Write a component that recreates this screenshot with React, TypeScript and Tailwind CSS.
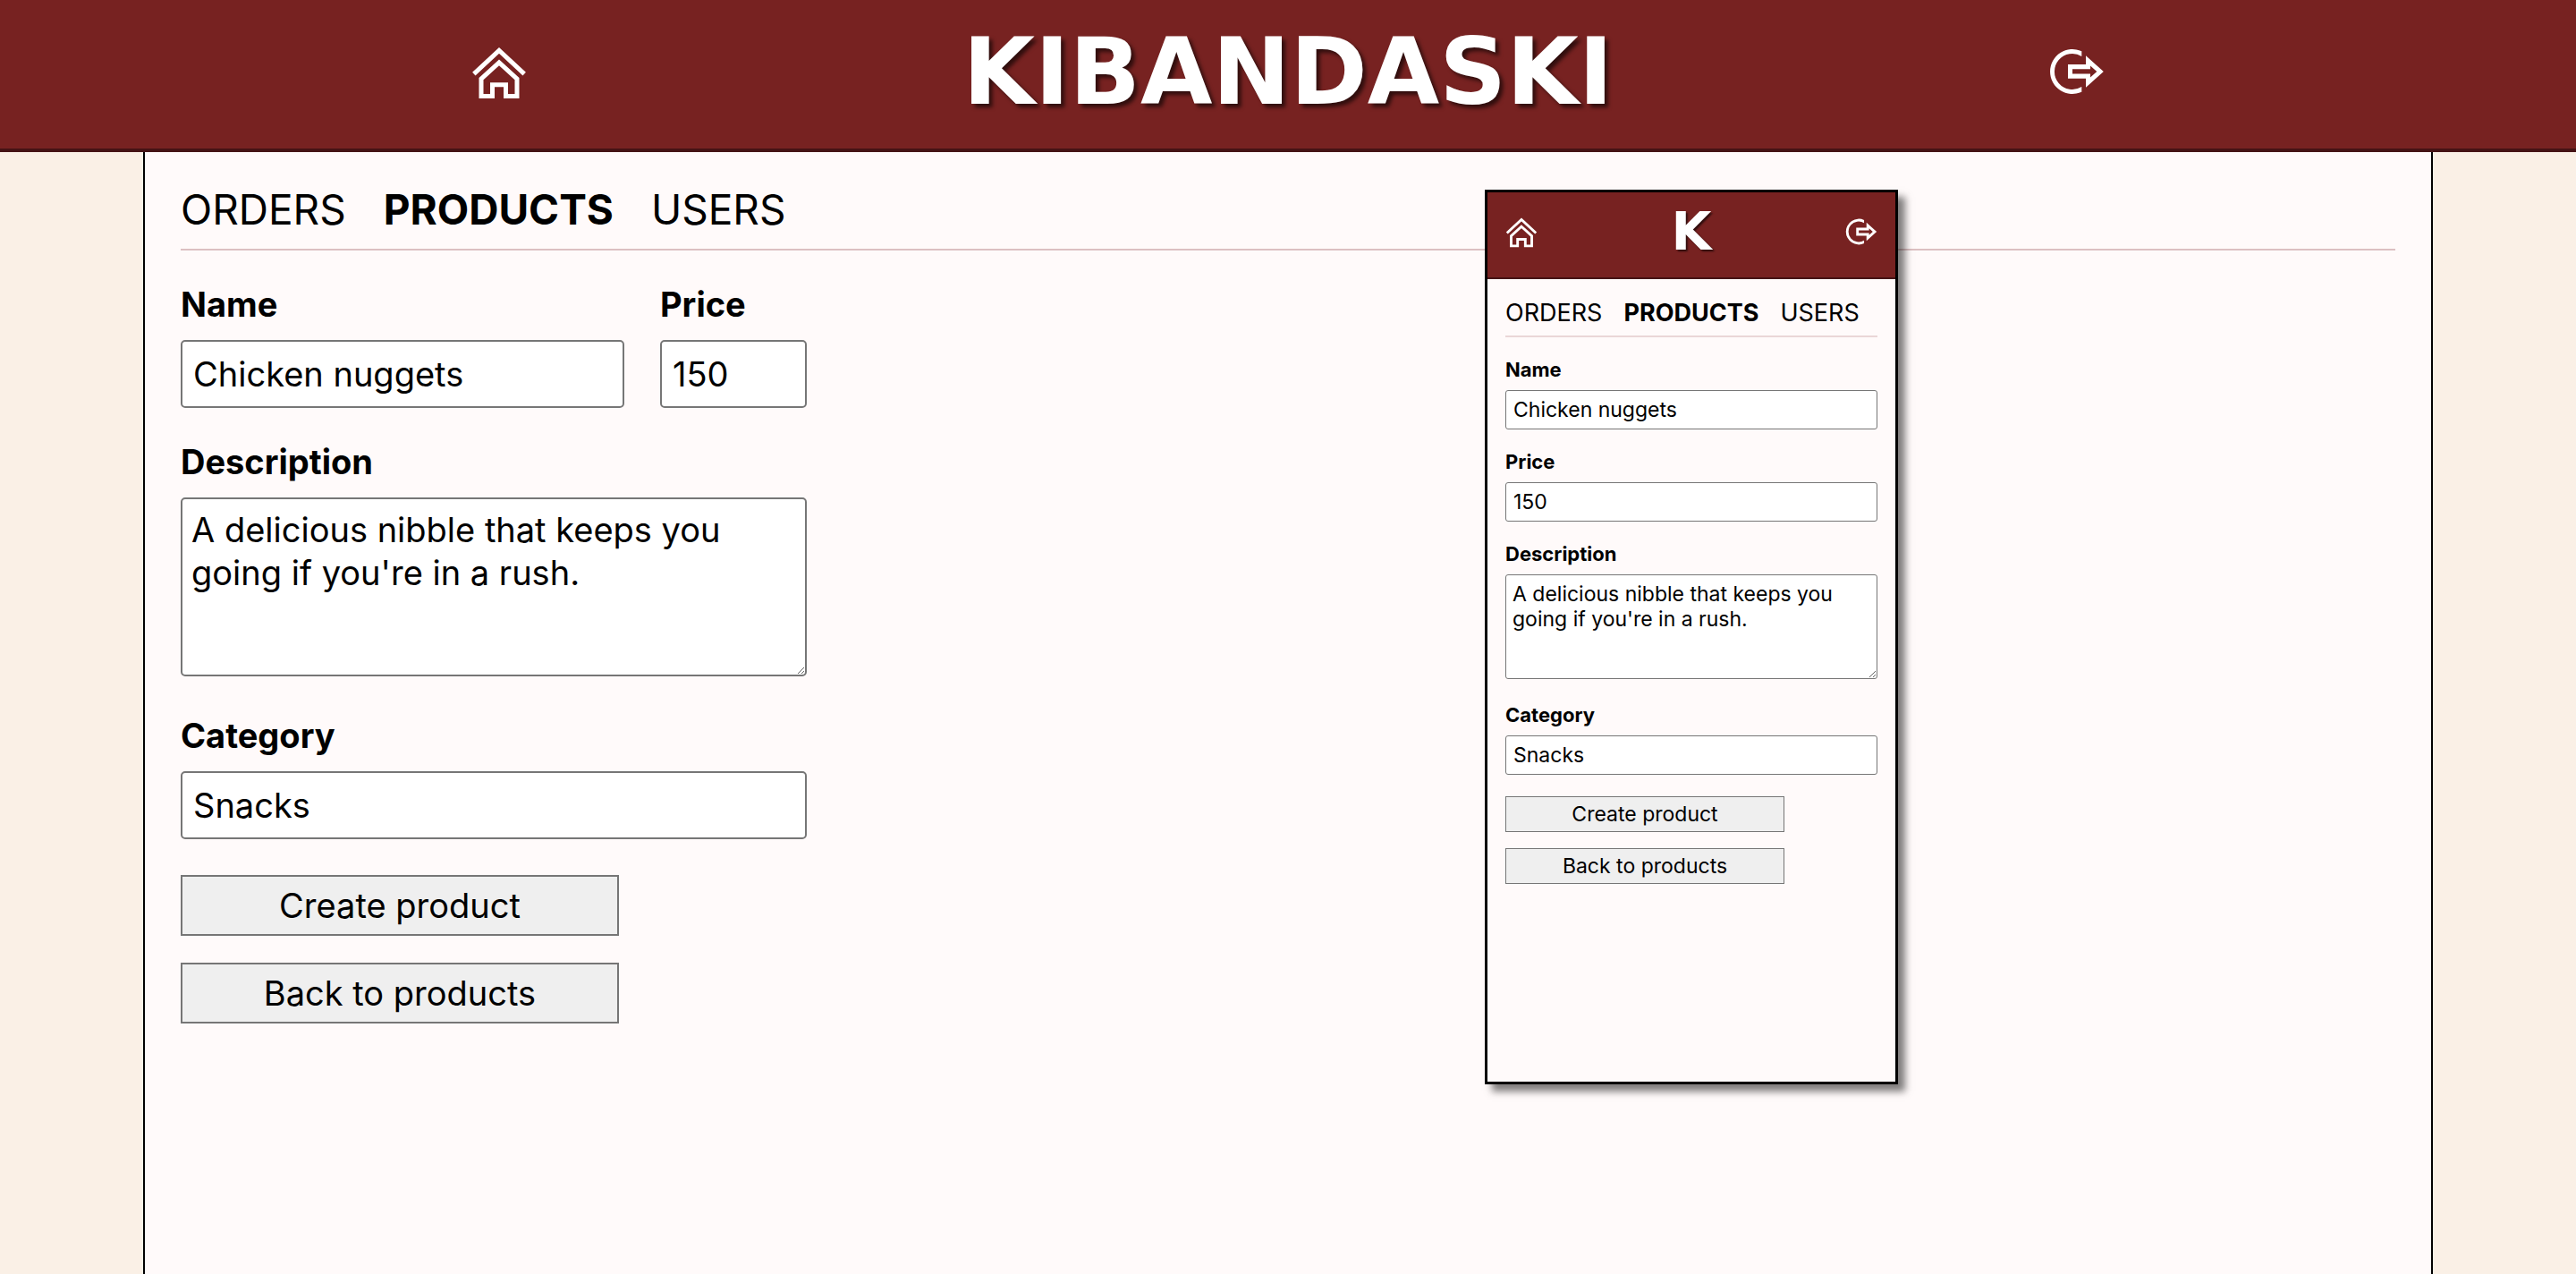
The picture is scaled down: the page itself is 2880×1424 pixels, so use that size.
import { useId } from "react";
import clsx from "clsx";

type Size = "large" | "small";

function HomeIcon({ className }: { className: string }) {
  return (
    <svg viewBox="0 0 80 80" fill="none" stroke="currentColor" strokeWidth="5" strokeMiterlimit="10" className={className} aria-hidden="true">
      <path d="M11.8 42.6 40 16.3 68.2 42.6" />
      <path d="M40 29.9 60 48.2V67.5H47.5V54.8H32.5V67.5H20V48.2Z" />
    </svg>
  );
}

function LogoutIcon({ className }: { className: string }) {
  return (
    <svg viewBox="0 0 80 80" fill="currentColor" className={className} aria-hidden="true">
      <path d="M45.3 17.2A25 25 0 1 0 45.3 62.8V57.1A20 20 0 1 1 45.3 22.9Z" />
      <path fillRule="evenodd" d="M30 32H50V22.3L69.8 40 50 57.7V47.7H30ZM35 37.2V42.5H55V46.5L62.3 40 55 33.5V37.2Z" />
    </svg>
  );
}

function Header({ size }: { size: Size }) {
  const large = size === "large";
  const icon = large ? "size-20" : "size-[46px]";
  return (
    <header
      className={clsx(
        "flex items-center justify-between border-[#451315] bg-[#772221] text-white",
        large ? "border-b-4 px-[18%] pt-6 pb-[30px]" : "border-b-2 px-[15px] pt-[21px] pb-7",
      )}
    >
      <a href="#home" aria-label="Home">
        <HomeIcon className={icon} />
      </a>
      <h1
        className={clsx(
          "font-['DejaVu_Sans',sans-serif] font-bold",
          large
            ? "text-[104px] leading-[112px] [text-shadow:4px_4px_4px_rgba(0,0,0,0.6)]"
            : "text-[58px] leading-[46px] [text-shadow:2px_2px_2px_rgba(0,0,0,0.6)]",
        )}
      >
        {large ? "KIBANDASKI" : "K"}
      </h1>
      <a href="#logout" aria-label="Log out">
        <LogoutIcon className={icon} />
      </a>
    </header>
  );
}

function Nav({ size }: { size: Size }) {
  return (
    <nav
      className={clsx(
        "flex border-b-2",
        size === "large"
          ? "gap-[42px] border-[#dcc0c2] pt-9 pb-4 text-[46px] leading-[56px]"
          : "gap-6 border-[#ead6d7] pt-[22px] pb-[9px] text-[27px] leading-8",
      )}
    >
      <a href="#orders">ORDERS</a>
      <a href="#products" aria-current="page" className="font-bold">
        PRODUCTS
      </a>
      <a href="#users">USERS</a>
    </nav>
  );
}

interface FieldProps {
  size: Size;
  label: string;
  value: string;
  multiline?: boolean;
  className?: string;
}

function Field({ size, label, value, multiline, className }: FieldProps) {
  const id = useId();
  const large = size === "large";
  const box = clsx(
    "block w-full border-[#767676] bg-white",
    large ? "rounded-[5px] border-2 text-[38px] leading-[48px]" : "rounded-[3px] border text-[23px] leading-7",
  );
  return (
    <div className={className}>
      <label
        htmlFor={id}
        className={clsx("block font-bold", large ? "mb-4 text-[38px] leading-[48px]" : "mb-[9px] text-[22px] leading-7")}
      >
        {label}
      </label>
      {multiline ? (
        <textarea
          id={id}
          defaultValue={value}
          className={clsx(box, large ? "mb-[6px] h-[200px] p-[10px]" : "mb-1 h-[117px] p-[7px]")}
        />
      ) : (
        <input id={id} type="text" defaultValue={value} className={clsx(box, large ? "p-3" : "px-2 py-[7px]")} />
      )}
    </div>
  );
}

function ProductForm({ size }: { size: Size }) {
  const large = size === "large";
  const button = clsx(
    "border-[#767676] bg-[#efefef]",
    large ? "border-2 py-2 text-[38px] leading-[48px]" : "border py-[5px] text-[23px] leading-7",
  );
  return (
    <form
      onSubmit={(e) => e.preventDefault()}
      className={clsx("flex flex-col", large ? "max-w-[700px] gap-9 pt-9" : "gap-[22px] pt-[22px]")}
    >
      <div className={clsx("flex", large ? "gap-10" : "flex-col gap-[22px]")}>
        <Field size={size} label="Name" value="Chicken nuggets" className="flex-1" />
        <Field size={size} label="Price" value="150" className={large ? "w-[164px]" : "w-full"} />
      </div>
      <Field size={size} label="Description" value="A delicious nibble that keeps you going if you're in a rush." multiline />
      <Field size={size} label="Category" value="Snacks" />
      <div className={clsx("flex flex-col", large ? "mt-1 w-[70%] gap-[30px]" : "mt-[2px] w-3/4 gap-[18px]")}>
        <button type="submit" className={button}>
          Create product
        </button>
        <button type="button" className={button}>
          Back to products
        </button>
      </div>
    </form>
  );
}

export default function App() {
  return (
    <div className="flex min-h-screen flex-col bg-[#faf0e6] font-[Inter,sans-serif] text-black">
      <Header size="large" />
      <main className="relative mx-auto w-full max-w-[2560px] flex-1 border-x-2 border-black bg-[#fffafa] px-10">
        <Nav size="large" />
        <ProductForm size="large" />
        <section
          aria-label="Mobile preview"
          className="absolute top-[42px] left-[1498px] h-[1000px] w-[462px] border-3 border-black bg-[#fffafa] shadow-[8px_8px_8px_rgba(0,0,0,0.5)]"
        >
          <Header size="small" />
          <div className="px-5">
            <Nav size="small" />
            <ProductForm size="small" />
          </div>
        </section>
      </main>
    </div>
  );
}
